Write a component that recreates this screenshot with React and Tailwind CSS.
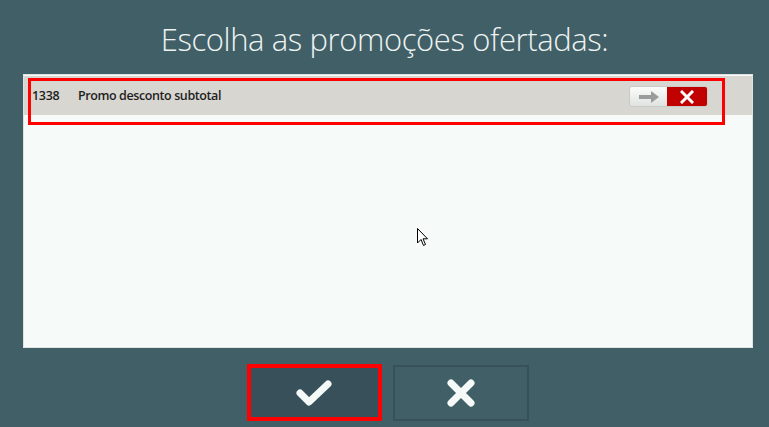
import React from 'react';

const font = { fontFamily: '"Open Sans", "Liberation Sans", sans-serif' };

function Toggle() {
  return (
    <div className="flex h-[21px] w-[79px] overflow-hidden rounded-[3px] border border-[#c9c9c5]">
      <div className="flex w-[37px] items-center justify-center bg-gradient-to-b from-[#fbfcfb] to-[#dfe3e0]">
        <svg width="22" height="12" viewBox="0 0 22 12">
          <rect x="1" y="4" width="13" height="4" fill="#9a9c9b" />
          <polygon points="13,0 21,6 13,12" fill="#9a9c9b" />
        </svg>
      </div>
      <div className="flex flex-1 items-center justify-center bg-[#c10000]">
        <svg width="14" height="14" viewBox="0 0 14 14">
          <path d="M2 2 L12 12 M12 2 L2 12" stroke="#fff" strokeWidth="3" strokeLinecap="square" />
        </svg>
      </div>
    </div>
  );
}

export default function App() {
  return (
    <div className="relative flex h-[427px] w-[769px] flex-col items-center bg-[#415f67]" style={font}>
      <h1 className="mt-[18px] h-[42px] text-[31px] font-light leading-[42px] tracking-[-0.4px] text-[#eef3f2]">
        Escolha as promoções ofertadas:
      </h1>

      <div className="mt-[14px] h-[274px] w-[730px] self-start ml-[23px] border border-[#dfe4e2] bg-[#f6faf8]">
        <div className="relative mt-[1px] flex h-[39px] items-center bg-[#d8d6d1] pl-[8px] pr-[44px] pt-[2px]">
          <span className="w-[46px] text-[12.5px] font-semibold tracking-[-0.3px] text-[#1e1e1e]">1338</span>
          <span className="flex-1 text-[12.5px] font-semibold tracking-[-0.4px] text-[#1e1e1e]">Promo desconto subtotal</span>
          <Toggle />
          <div className="absolute left-[4px] top-[2px] h-[47px] w-[697px] border-[3px] border-[#ff0000]" />
        </div>
      </div>

      <div className="mt-[16px] flex gap-[11px] pl-[6px]">
        <button className="flex h-[57px] w-[135px] items-center justify-center border-[4px] border-[#ff0000] bg-[#37505a]">
          <svg width="38" height="28" viewBox="0 0 38 28">
            <path d="M5 14 L14 23 L33 5" stroke="#f5faf8" strokeWidth="7" fill="none" strokeLinecap="round" strokeLinejoin="round" />
          </svg>
        </button>
        <button className="mt-[1px] flex h-[56px] w-[136px] items-center justify-center border-2 border-[#37505a] bg-[#415f67]">
          <svg width="30" height="30" viewBox="0 0 30 30">
            <path d="M5 5 L25 25 M25 5 L5 25" stroke="#f5faf8" strokeWidth="7" fill="none" strokeLinecap="round" />
          </svg>
        </button>
      </div>

      <svg className="absolute left-[417px] top-[228px]" width="12" height="19" viewBox="0 0 12 19">
        <path d="M0.5 0.5 L0.5 15 L4 11.5 L6.5 17.5 L8.5 16.5 L6 10.8 L10.5 10.8 Z" fill="#fff" stroke="#000" strokeWidth="1" />
      </svg>
    </div>
  );
}
